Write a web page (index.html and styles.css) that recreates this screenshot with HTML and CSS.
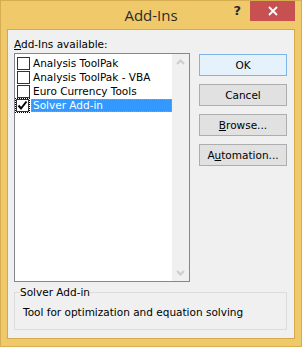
FILE: index.html
```html
<!DOCTYPE html>
<html>
<head>
<meta charset="utf-8">
<link rel="stylesheet" href="styles.css">
</head>
<body>
<div class="window">
  <div class="titlebar">
    <div></div>
    <div class="title">Add-Ins</div>
    <div class="controls">
      <span class="help">?</span>
      <span class="close"><svg width="10" height="10" viewBox="0 0 10 10"><path d="M1 1 L9 9 M9 1 L1 9" stroke="#fff" stroke-width="1.8"/></svg></span>
    </div>
  </div>
  <div class="client">
    <div class="main">
      <div class="leftcol">
        <div class="label"><u>A</u>dd-Ins available:</div>
        <div class="listbox">
          <div class="items">
            <div class="item"><span class="cb"></span><span class="txt">Analysis ToolPak</span></div>
            <div class="item"><span class="cb"></span><span class="txt">Analysis ToolPak - VBA</span></div>
            <div class="item"><span class="cb"></span><span class="txt">Euro Currency Tools</span></div>
            <div class="item sel"><span class="cbwrap"><span class="cb"><svg width="11" height="11" viewBox="0 0 11 11"><path d="M1.5 5.5 L4 8.5 L9.5 1.5" fill="none" stroke="#000" stroke-width="2"/></svg></span></span><span class="txt">Solver Add-in</span></div>
          </div>
          <div class="scrollbar">
            <svg width="17" height="17" viewBox="0 0 17 17"><path d="M5 10 L8.5 6.5 L12 10" fill="none" stroke="#cdcdcd" stroke-width="2"/></svg>
            <svg width="17" height="17" viewBox="0 0 17 17"><path d="M5 7 L8.5 10.5 L12 7" fill="none" stroke="#cdcdcd" stroke-width="2"/></svg>
          </div>
        </div>
      </div>
      <div class="buttons">
        <div class="btn default">OK</div>
        <div class="btn">Cancel</div>
        <div class="btn"><u>B</u>rowse...</div>
        <div class="btn">A<u>u</u>tomation...</div>
      </div>
    </div>
    <fieldset class="group">
      <legend>Solver Add-in</legend>
      <p class="desc">Tool for optimization and equation solving</p>
    </fieldset>
  </div>
</div>
</body>
</html>
```
FILE: styles.css
```css
html, body {
  margin: 0;
  padding: 0;
}
body {
  width: 302px;
  height: 347px;
  overflow: hidden;
  font-family: "DejaVu Sans", sans-serif;
  font-size: 10.5px;
  color: #000;
}
.window {
  box-sizing: border-box;
  width: 302px;
  height: 347px;
  background: #f0c96b;
  border: 1px solid #d7ad52;
  display: flex;
  flex-direction: column;
}
.titlebar {
  height: 28px;
  display: grid;
  grid-template-columns: 1fr auto 1fr;
  align-items: start;
}
.title {
  font-family: "Open Sans", sans-serif;
  font-size: 15px;
  line-height: 28px;
  color: #2b2b2b;
}
.controls {
  display: flex;
  justify-content: flex-end;
  align-items: flex-start;
  margin-right: 6px;
}
.help {
  font-family: "DejaVu Sans", sans-serif;
  font-weight: bold;
  font-size: 13px;
  line-height: 20px;
  color: #2b2b2b;
  margin-right: 9px;
}
.close {
  width: 45px;
  height: 20px;
  background: #c75050;
  display: flex;
  align-items: center;
  justify-content: center;
}
.client {
  margin: 0 6px 7px 6px;
  border: 1px solid #d4a94e;
  background: #f0f0f0;
  flex: 1;
  padding: 8px 7px 8px 6px;
  display: flex;
  flex-direction: column;
}
.main {
  display: flex;
  gap: 9px;
}
.leftcol {
  width: 176px;
  display: flex;
  flex-direction: column;
}
.label {
  line-height: 13px;
  height: 13px;
  margin-bottom: 2px;
}
.listbox {
  box-sizing: border-box;
  height: 229px;
  border: 1px solid #828790;
  background: #fff;
  display: flex;
}
.items {
  flex: 1;
  padding-top: 2px;
}
.item {
  height: 14px;
  display: flex;
  align-items: center;
}
.cb {
  box-sizing: border-box;
  width: 13px;
  height: 13px;
  border: 1px solid #333;
  background: #fff;
  display: flex;
  align-items: center;
  justify-content: center;
}
.item .cb {
  margin-left: 2px;
}
.cbwrap {
  display: flex;
  border: 1px dotted #000;
}
.cbwrap .cb {
  margin-left: 0;
}
.txt {
  margin-left: 3px;
  line-height: 13px;
  white-space: nowrap;
}
.sel .txt {
  margin-left: 1px;
  flex: 1;
  background: #3399ff;
  color: #fff;
  padding-left: 2px;
  outline: 1px dotted #e88b2a;
  outline-offset: -1px;
  height: 13px;
}
.scrollbar {
  width: 17px;
  background: #f0f0f0;
  display: flex;
  flex-direction: column;
  justify-content: space-between;
}
.buttons {
  width: 88px;
  display: flex;
  flex-direction: column;
  gap: 8px;
  padding-top: 16px;
}
.btn {
  box-sizing: border-box;
  height: 22px;
  border: 1px solid #adadad;
  background: #e1e1e1;
  display: flex;
  align-items: center;
  justify-content: center;
}
.btn.default {
  background: #e5f1fb;
  border: 1px solid #7eb4ea;
}
.group {
  margin: 4px 0 0 0;
  padding: 0 8px 10px 5px;
  border: 1px solid #dcdcdc;
  height: 44px;
  box-sizing: border-box;
  min-width: 0;
}
.group legend {
  padding: 0;
  line-height: 13px;
}
.desc {
  margin: 7px 0 0 3px;
  line-height: 13px;
}
```
